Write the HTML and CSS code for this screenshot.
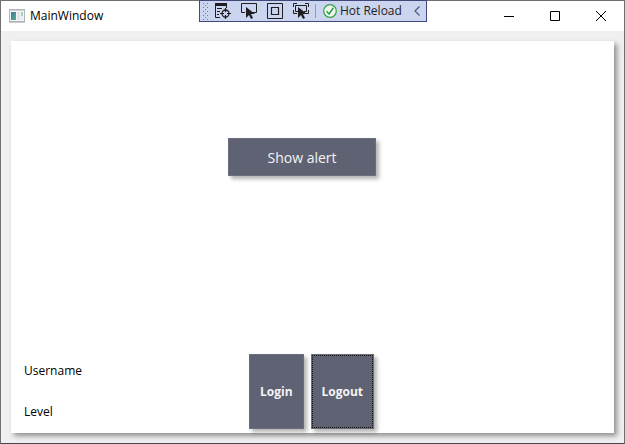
FILE: index.html
```html
<!DOCTYPE html>
<html lang="en">
<head>
<meta charset="utf-8">
<title>MainWindow</title>
<link rel="stylesheet" href="styles.css">
</head>
<body>
<div class="window">
  <header class="titlebar">
    <svg class="app-icon" width="16" height="14" viewBox="0 0 16 14" aria-hidden="true">
      <defs><linearGradient id="pane" x1="0" y1="0" x2="1" y2="1"><stop offset="0" stop-color="#4273a8"/><stop offset="1" stop-color="#55b287"/></linearGradient></defs>
      <rect x=".5" y=".5" width="15" height="12" fill="#f4f5f7" stroke="#b0b4b9"/>
      <path d="M1 1.5h14" stroke="#d0d3d8"/>
      <rect x="2" y="3" width="5" height="8" fill="url(#pane)"/>
      <rect x="8" y="3" width="3" height="8" fill="#e1e5ec"/>
      <rect x="12" y="3" width="2" height="4" fill="#a5d3c2"/>
      <rect x="12" y="7" width="2" height="4" fill="#e6eaf2"/>
      <path d="M0 13.5h16" stroke="#c9c9cc"/>
    </svg>
    <h1 class="title">MainWindow</h1>
    <div class="captions">
      <button class="caption" aria-label="Minimize"><svg width="10" height="11" viewBox="0 0 10 11"><path d="M0 5.5h10" stroke="#000"/></svg></button>
      <button class="caption" aria-label="Maximize"><svg width="10" height="10" viewBox="0 0 10 10"><path d="M.5 .5h9v9h-9z" fill="none" stroke="#000"/></svg></button>
      <button class="caption" aria-label="Close"><svg width="10" height="10" viewBox="0 0 10 10"><path d="M0 0l10 10M10 0L0 10" stroke="#000"/></svg></button>
    </div>
  </header>
  <main class="content">
    <section class="panel">
      <button class="btn alert">Show alert</button>
      <div class="labels">
        <span>Username</span>
        <span>Level</span>
      </div>
      <div class="actions">
        <button class="btn action">Login</button>
        <button class="btn action focused">Logout</button>
      </div>
    </section>
  </main>
</div>
<div class="debugbar" role="toolbar" aria-label="Debug tools">
  <svg class="grip" width="7" height="17" viewBox="0 0 7 17" aria-hidden="true">
    <path d="M.5 0v17M4.500 0v17" stroke="#6f78a8" stroke-dasharray="1 3"/>
    <path d="M2.500 2v15" stroke="#6f78a8" stroke-dasharray="1 3"/>
  </svg>
  <button class="tool" aria-label="Live visual tree"><svg width="17" height="17" viewBox="0 0 17 17" fill="none" stroke="#1e1e22">
    <path d="M0 0h12v3H0z" fill="#1e1e22" stroke="none"/>
    <path d="M.5 3v11.500H5M11.500 3v2M2 5.500h5M2 8.500h3M2 11.500h2"/>
    <circle cx="10.500" cy="10.500" r="3.500" stroke-width="1.300"/>
    <path d="M10.500 5v4M10.500 12v4M5 10.500h4M12 10.500h4" stroke-width="1.200"/></svg></button>
  <button class="tool" aria-label="Select element"><svg width="17" height="17" viewBox="0 0 17 17" fill="none" stroke="#1e1e22">
    <path d="M4 9.500H.5V.5h15v9H11"/>
    <path d="M5 4v11l3-3 2 4 2-1-2-4h4z" fill="#1e1e22" stroke="none"/></svg></button>
  <button class="tool" aria-label="Display layout adorners"><svg width="17" height="17" viewBox="0 0 17 17" fill="none" stroke="#1e1e22">
    <path d="M.5 .5h15v15H.5z"/><path d="M4.500 4.500h7v7h-7z" stroke-width="1.200"/></svg></button>
  <button class="tool" aria-label="Track focused element"><svg width="17" height="17" viewBox="0 0 17 17" fill="none" stroke="#1e1e22">
    <path d="M.5 4V.5H4M12 .5h3.500V4M.5 7v3.500H4M12 10.500h3.500V7"/>
    <path d="M5 8.500H2.500v-6h11v6H11"/>
    <path d="M5 4v11l3-3 2 4 2-1-2-4h4z" fill="#1e1e22" stroke="none"/></svg></button>
  <span class="divider"></span>
  <button class="reload">
    <svg width="14" height="14" viewBox="0 0 14 14" fill="none" aria-hidden="true"><circle cx="7" cy="7" r="6.300" fill="#f2f8f4" stroke="#35a042" stroke-width="1.200"/><path d="M3.500 7.300l2.600 2.700 4.200-6.300" stroke="#35a042" stroke-width="1.600"/></svg>
    <span>Hot Reload</span>
  </button>
  <button class="collapse" aria-label="Collapse"><svg width="6" height="10" viewBox="0 0 6 10" fill="none"><path d="M5.500 .5L1 5l4.500 4.500" stroke="#4a5488" stroke-width="1.200"/></svg></button>
</div>
</body>
</html>
```
FILE: styles.css
```css
* {
  box-sizing: border-box;
}

body {
  margin: 0;
  font: 12px/16px "Open Sans", "Noto Sans", sans-serif;
  color: #000;
}

button {
  padding: 0;
  border: 0;
  background: none;
  font: inherit;
  color: inherit;
}

svg {
  display: block;
}

.window {
  display: flex;
  flex-direction: column;
  min-height: 100vh;
  border: 1px solid #707070;
  border-bottom-color: #45454f;
  background: #f0f0f0;
}

.titlebar {
  display: flex;
  align-items: center;
  height: 30px;
  padding-left: 8px;
  background: #fff;
}

.title {
  flex: 1;
  margin: 0 0 0 5px;
  font: inherit;
}

.captions {
  display: flex;
  align-self: stretch;
}

.caption {
  display: grid;
  place-items: center;
  width: 46px;
}

.content {
  display: flex;
  flex: 1;
  padding: 10px;
}

.panel {
  flex: 1;
  display: grid;
  grid-template-columns: 1fr auto 1fr;
  grid-template-rows: 1fr auto;
  background: #fff;
  box-shadow: 3px 3px 5px rgba(0, 0, 0, 0.4);
}

.btn {
  border: 1px solid #6b6e7d;
  background: #5f6272;
  color: #f4f4f6;
  box-shadow: 3px 3px 4px rgba(0, 0, 0, 0.3);
}

.alert {
  grid-column: 2;
  width: 148px;
  height: 38px;
  margin: 97px 0 0 -21px;
  padding-top: 2px;
  font-size: 14px;
}

.labels {
  grid-column: 1;
  grid-row: 2;
  display: grid;
  grid-template-rows: 41px 41px;
  align-items: center;
  padding: 0 0 1px 13px;
}

.actions {
  grid-column: 2;
  grid-row: 2;
  display: flex;
  gap: 7px;
  padding: 4px 0;
}

.action {
  padding: 0 10px;
  font-weight: 700;
}

.focused {
  outline: 1px dotted #111;
  outline-offset: -2px;
}

.debugbar {
  position: absolute;
  top: 0;
  left: 199px;
  display: flex;
  align-items: center;
  width: 228px;
  height: 22px;
  padding-left: 3px;
  border: 1px solid #41497c;
  background: #ccd5f0;
  color: #1e1e22;
}

.grip {
  margin-right: 5px;
}

.tool {
  width: 17px;
  margin-right: 9px;
}

.divider {
  width: 1px;
  height: 14px;
  margin-right: 7px;
  background: #8b9cc9;
}

.tool + .divider {
  margin-left: -4px;
}

.reload {
  display: flex;
  align-items: center;
  gap: 3px;
}

.collapse {
  margin: 0 6px 0 auto;
}
```
